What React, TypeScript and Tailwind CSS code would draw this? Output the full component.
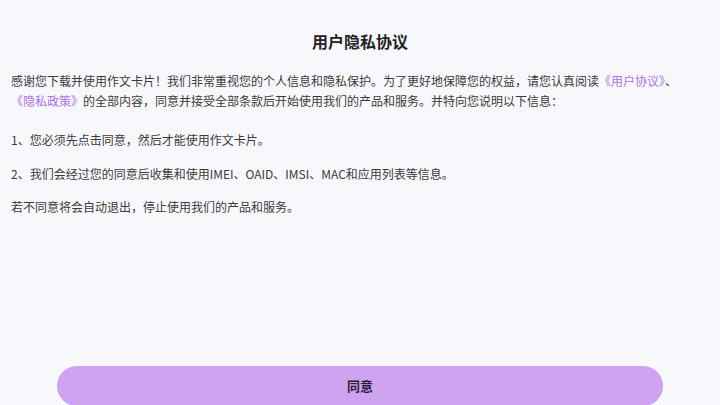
export default function App() {
  return (
    <div
      className="relative h-[405px] w-[720px] overflow-hidden bg-[#f8f8fc] text-[#3a3a3a]"
      style={{ fontFamily: '"Noto Sans CJK SC", "Noto Sans", sans-serif' }}
    >
      {/* Title */}
      <h1 className="pt-[31px] text-center text-[16px] font-bold leading-[20px] text-[#222]">
        用户隐私协议
      </h1>

      {/* Body */}
      <div className="pl-[11px] pr-[28px] text-[12px] leading-[20px]">
        <p className="mt-[20px]">
          感谢您下载并使用作文卡片！我们非常重视您的个人信息和隐私保护。为了更好地保障您的权益，请您认真阅读
          <span className="text-[#a874e0]">《用户协议》</span>、
          <span className="text-[#a874e0]">《隐私政策》</span>
          的全部内容，同意并接受全部条款后开始使用我们的产品和服务。并特向您说明以下信息：
        </p>
        <p className="mt-[19px]">1、您必须先点击同意，然后才能使用作文卡片。</p>
        <p className="mt-[14px]">2、我们会经过您的同意后收集和使用IMEI、OAID、IMSI、MAC和应用列表等信息。</p>
        <p className="mt-[13px]">若不同意将会自动退出，停止使用我们的产品和服务。</p>
      </div>

      {/* Agree button */}
      <div className="absolute left-0 right-0 top-[366px] flex justify-center">
        <button className="h-[40px] w-[606px] rounded-full bg-[#cfa3ef] text-[13px] font-bold text-[#2a1d38]">
          同意
        </button>
      </div>
    </div>
  )
}
